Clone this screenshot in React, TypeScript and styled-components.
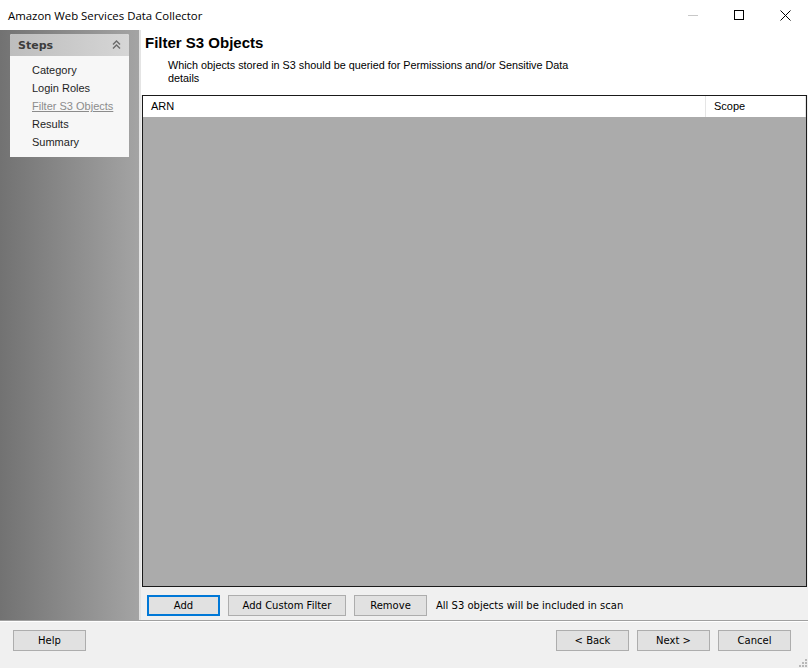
import styled, { createGlobalStyle } from "styled-components";

const Global = createGlobalStyle`
  html, body {
    margin: 0;
    padding: 0;
    background: #f0f0f0;
  }
  body {
    font-family: "Liberation Sans", Arial, sans-serif;
  }
`;

const Window = styled.div`
  width: 808px;
  height: 668px;
  display: flex;
  flex-direction: column;
  background: #f0f0f0;
  overflow: hidden;
  position: relative;
`;

const TitleBar = styled.div`
  height: 30px;
  flex: none;
  background: #fff;
  display: flex;
  align-items: center;
  padding-left: 8px;
  font-family: "Open Sans", "Noto Sans", sans-serif;
  font-size: 11.4px;
  color: #000;
`;

const TitleText = styled.span`
  flex: 1;
`;

const WinButton = styled.div`
  width: 46px;
  height: 30px;
  display: flex;
  align-items: center;
  justify-content: center;
`;

const Main = styled.div`
  height: 590px;
  flex: none;
  display: flex;
`;

const Sidebar = styled.div`
  width: 141px;
  flex: none;
  background: linear-gradient(to right, #727272, #a4a4a4);
  border-right: 2px solid #e4e4e4;
  padding: 4px 10px 0 10px;
  box-sizing: border-box;
`;

const StepsBox = styled.div`
  background: #f7f7f7;
  border-radius: 2px 2px 0 0;
  overflow: hidden;
`;

const StepsHeader = styled.div`
  height: 22px;
  background: linear-gradient(to right, #bdbdbd, #d6d6d6);
  display: flex;
  align-items: center;
  justify-content: space-between;
  padding: 0 8px 0 8px;
  font-family: "DejaVu Sans", sans-serif;
  font-weight: bold;
  font-size: 11px;
  color: #3c3c3c;
`;

const StepList = styled.div`
  padding: 5px 0 6px 22px;
  display: flex;
  flex-direction: column;
`;

const Step = styled.div<{ $current?: boolean }>`
  height: 18px;
  line-height: 18px;
  font-size: 11px;
  color: ${(p) => (p.$current ? "#8c8c8c" : "#1e1e1e")};
  text-decoration: ${(p) => (p.$current ? "underline" : "none")};
`;

const Content = styled.div`
  flex: 1;
  display: flex;
  flex-direction: column;
  min-width: 0;
`;

const Header = styled.div`
  background: #fff;
  height: 65px;
  flex: none;
  padding: 4px 0 0 4px;
  box-sizing: border-box;
`;

const PageTitle = styled.div`
  font-weight: bold;
  font-size: 15px;
  line-height: 18px;
  color: #000;
`;

const Description = styled.div`
  margin: 7px 0 0 23px;
  width: 410px;
  font-size: 10.8px;
  line-height: 13px;
  color: #000;
`;

const ListView = styled.div`
  flex: 1;
  margin: 0 1px 0 1px;
  border: 1px solid #1a1a1a;
  background: #ababab;
  display: flex;
  flex-direction: column;
`;

const ListHeader = styled.div`
  height: 21px;
  background: #fff;
  display: flex;
  font-size: 11px;
  color: #000;
`;

const Column = styled.div<{ $width?: number }>`
  ${(p) => (p.$width ? `width: ${p.$width}px; flex: none;` : "flex: 1;")}
  padding-left: 8px;
  line-height: 21px;
  border-right: 1px solid #e5e5e5;
  box-sizing: border-box;
`;

const ActionRow = styled.div`
  height: 33px;
  flex: none;
  display: flex;
  align-items: flex-start;
  gap: 8px;
  padding: 8px 0 0 6px;
  box-sizing: border-box;
  font-family: "DejaVu Sans", sans-serif;
  font-size: 10px;
`;

const Button = styled.button<{ $width?: number; $default?: boolean }>`
  width: ${(p) => p.$width ?? 73}px;
  height: 21px;
  padding: 0;
  background: #e1e1e1;
  border: ${(p) => (p.$default ? "2px solid #0078d7" : "1px solid #adadad")};
  font-family: "DejaVu Sans", sans-serif;
  font-size: 10px;
  color: #000;
  box-sizing: border-box;
`;

const Note = styled.span`
  margin-left: 1px;
  line-height: 21px;
  color: #000;
`;

const Footer = styled.div`
  height: 48px;
  flex: none;
  border-top: 1px solid #a0a0a0;
  box-shadow: inset 0 1px 0 #fff;
  display: flex;
  align-items: flex-start;
  padding: 9px 17px 0 13px;
  box-sizing: border-box;
  gap: 8px;
`;

const Spacer = styled.div`
  flex: 1;
`;

const Grip = styled.svg`
  position: absolute;
  right: 1px;
  bottom: 1px;
`;

export default function App() {
  return (
    <Window>
      <Global />
      <TitleBar>
        <TitleText>Amazon Web Services Data Collector</TitleText>
        <WinButton>
          <svg width="10" height="10" viewBox="0 0 10 10">
            <line x1="0" y1="5.5" x2="10" y2="5.5" stroke="#c8c8c8" strokeWidth="1" />
          </svg>
        </WinButton>
        <WinButton>
          <svg width="10" height="10" viewBox="0 0 10 10">
            <rect x="0.5" y="0.5" width="9" height="9" fill="none" stroke="#000" strokeWidth="1" />
          </svg>
        </WinButton>
        <WinButton>
          <svg width="11" height="11" viewBox="0 0 11 11">
            <path d="M0.5 0.5 L10.5 10.5 M10.5 0.5 L0.5 10.5" stroke="#000" strokeWidth="1" />
          </svg>
        </WinButton>
      </TitleBar>
      <Main>
        <Sidebar>
          <StepsBox>
            <StepsHeader>
              <span>Steps</span>
              <svg width="9" height="10" viewBox="0 0 9 10">
                <path d="M1 4.5 L4.5 1 L8 4.5 M1 8.5 L4.5 5 L8 8.5" fill="none" stroke="#6a6a6a" strokeWidth="1.4" />
              </svg>
            </StepsHeader>
            <StepList>
              <Step>Category</Step>
              <Step>Login Roles</Step>
              <Step $current>Filter S3 Objects</Step>
              <Step>Results</Step>
              <Step>Summary</Step>
            </StepList>
          </StepsBox>
        </Sidebar>
        <Content>
          <Header>
            <PageTitle>Filter S3 Objects</PageTitle>
            <Description>
              Which objects stored in S3 should be queried for Permissions and/or Sensitive Data details
            </Description>
          </Header>
          <ListView>
            <ListHeader>
              <Column>ARN</Column>
              <Column $width={100}>Scope</Column>
            </ListHeader>
          </ListView>
          <ActionRow>
            <Button $default>Add</Button>
            <Button $width={118}>Add Custom Filter</Button>
            <Button>Remove</Button>
            <Note>All S3 objects will be included in scan</Note>
          </ActionRow>
        </Content>
      </Main>
      <Footer>
        <Button>Help</Button>
        <Spacer />
        <Button>&lt; Back</Button>
        <Button>Next &gt;</Button>
        <Button>Cancel</Button>
      </Footer>
      <Grip width="10" height="10" viewBox="0 0 10 10">
        <g fill="#b8b8b8">
          <rect x="8" y="2" width="2" height="2" />
          <rect x="5" y="5" width="2" height="2" />
          <rect x="8" y="5" width="2" height="2" />
          <rect x="2" y="8" width="2" height="2" />
          <rect x="5" y="8" width="2" height="2" />
          <rect x="8" y="8" width="2" height="2" />
        </g>
      </Grip>
    </Window>
  );
}
